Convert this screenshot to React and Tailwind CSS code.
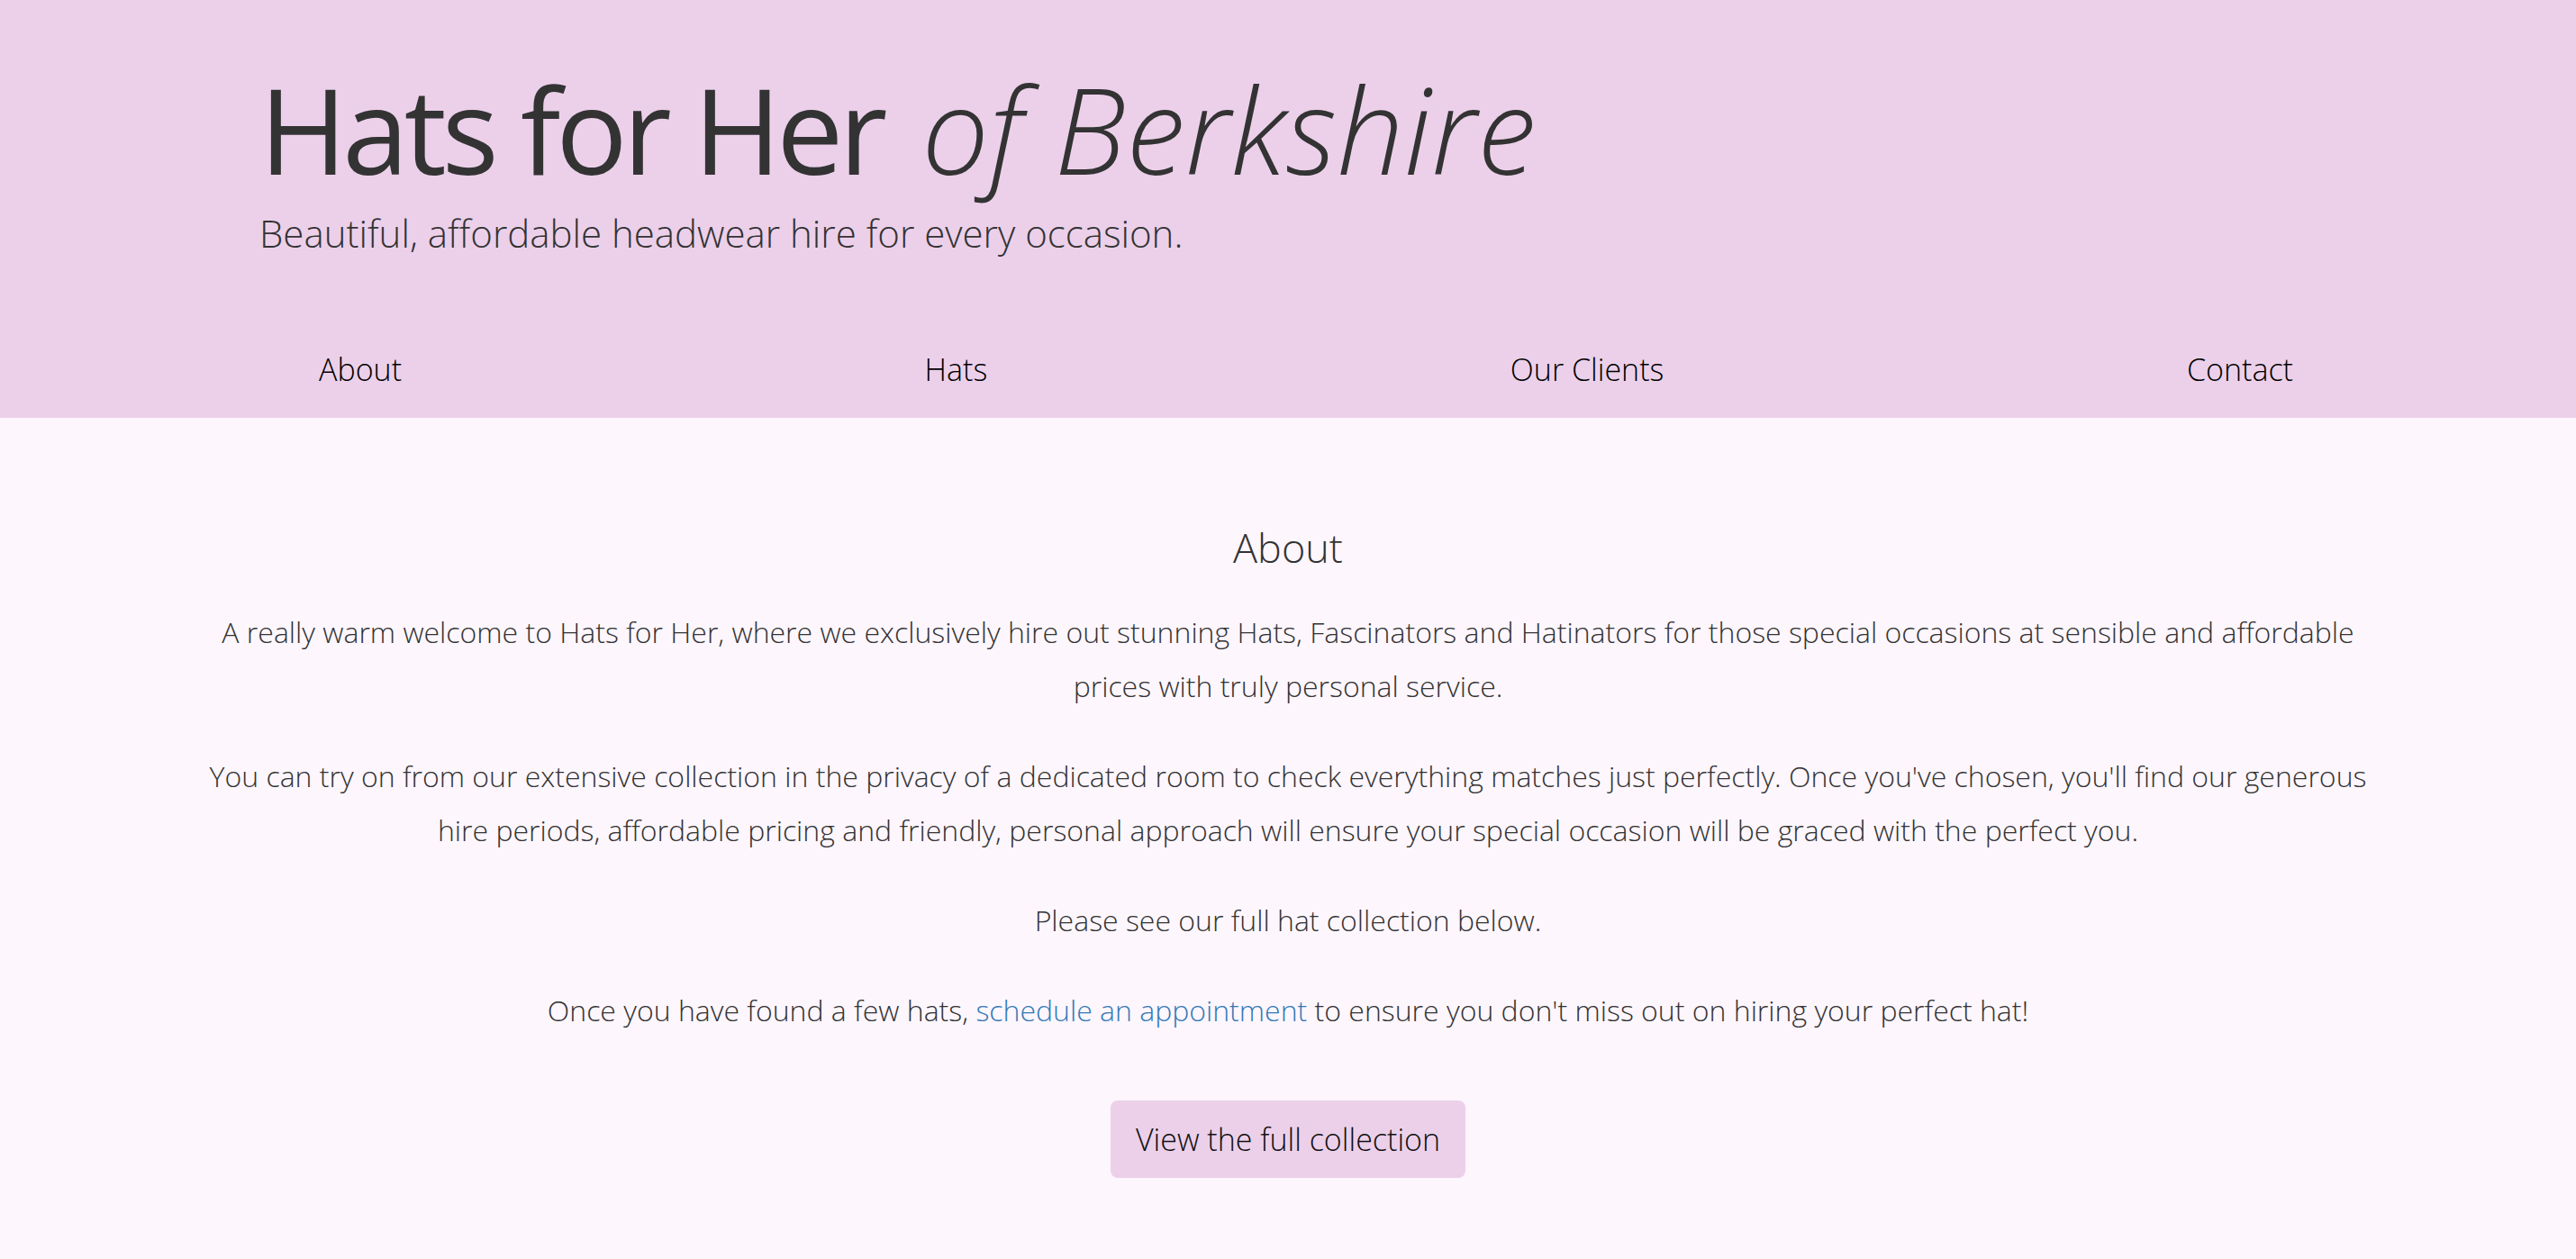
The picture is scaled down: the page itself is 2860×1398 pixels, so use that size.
const paragraphs = [
  "A really warm welcome to Hats for Her, where we exclusively hire out stunning Hats, Fascinators and Hatinators for those special occasions at sensible and affordable prices with truly personal service.",
  "You can try on from our extensive collection in the privacy of a dedicated room to check everything matches just perfectly. Once you've chosen, you'll find our generous hire periods, affordable pricing and friendly, personal approach will ensure your special occasion will be graced with the perfect you.",
  "Please see our full hat collection below.",
];

const navItems = ["About", "Hats", "Our Clients", "Contact"];

const App = () => {
  return (
    <div
      className="min-h-screen bg-[#fdf6fd] font-light text-[#333]"
      style={{ fontFamily: '"Open Sans", "Liberation Sans", sans-serif' }}
    >
      <header className="bg-[#ecd0ea]">
        <div className="pl-[288px] pt-[77px]">
          <h1 className="text-[132px] leading-none font-light text-[#333]">
            <span className="font-normal tracking-[-5px]">Hats for Her</span>
            <em className="ml-[43px] italic tracking-[0.4px]">of Berkshire</em>
          </h1>
          <p className="mt-[29px] text-[42px] leading-none text-[#333]">
            Beautiful, affordable headwear hire for every occasion.
          </p>
        </div>
        <nav className="flex justify-between pl-[354px] pr-[314px] pt-[113px] pb-[37px]">
          {navItems.map((item) => (
            <a key={item} href="#" className="text-[34px] leading-none text-black">
              {item}
            </a>
          ))}
        </nav>
      </header>

      <main className="px-[215px] pt-[121px] pb-[90px] text-center">
        <h2 className="text-[45px] leading-none font-light mb-[42px]">About</h2>
        {paragraphs.map((p, i) => (
          <p key={i} className="text-[32px] leading-[60px] mb-[40px]">
            {p}
          </p>
        ))}
        <p className="text-[32px] leading-[60px]">
          Once you have found a few hats,{" "}
          <a href="#" className="text-[#337ab7]">
            schedule an appointment
          </a>{" "}
          to ensure you don't miss out on hiring your perfect hat!
        </p>
        <button className="mt-[70px] rounded-lg bg-[#ecd0ea] px-[28px] py-4 text-[34px] leading-[54px] font-light text-[#111]">
          View the full collection
        </button>
      </main>
    </div>
  );
};

export default App;
